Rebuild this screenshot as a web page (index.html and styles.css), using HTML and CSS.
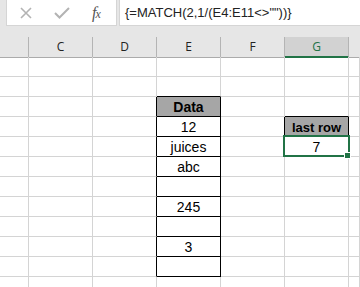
FILE: index.html
```html
<!DOCTYPE html>
<html>
<head>
    <title>MATCH last row</title>
    <link rel="stylesheet" href="styles.css">
</head>
<body>
    <div class="formula-bar">
        <div class="bar-buttons">
            <svg class="btn-icon" width="14" height="12" viewBox="0 0 14 12" fill="none" stroke="currentColor" stroke-width="1.6">
                <path d="M2 1l10 10M12 1L2 11"></path>
            </svg>
            <svg class="btn-icon" width="16" height="12" viewBox="0 0 16 12" fill="none" stroke="currentColor" stroke-width="2">
                <path d="M1 6l4.5 4.5L15 1"></path>
            </svg>
            <span class="fx">f<span class="fx-x">x</span></span>
        </div>
        <div class="formula">{=MATCH(2,1/(E4:E11&lt;&gt;""))}</div>
    </div>

    <div class="col-heads">
        <div class="head"></div>
        <div class="head">C</div>
        <div class="head">D</div>
        <div class="head">E</div>
        <div class="head">F</div>
        <div class="head active">G</div>
        <div class="head last"></div>
    </div>

    <div class="sheet">
        <!-- row 1 -->
        <div class="c"></div><div class="c"></div><div class="c"></div><div class="c"></div><div class="c"></div><div class="c"></div><div class="c"></div>
        <!-- row 2 -->
        <div class="c"></div><div class="c"></div><div class="c"></div><div class="c bb"></div><div class="c"></div><div class="c"></div><div class="c"></div>
        <!-- row 3 -->
        <div class="c"></div><div class="c"></div><div class="c br"></div><div class="c box th">Data</div><div class="c"></div><div class="c bb"></div><div class="c"></div>
        <!-- row 4 -->
        <div class="c"></div><div class="c"></div><div class="c br"></div><div class="c box">12</div><div class="c br"></div><div class="c box th narrow">last row</div><div class="c"></div>
        <!-- row 5 -->
        <div class="c"></div><div class="c"></div><div class="c br"></div><div class="c box">juices</div><div class="c"></div><div class="c sel">7</div><div class="c"></div>
        <!-- row 6 -->
        <div class="c"></div><div class="c"></div><div class="c br"></div><div class="c box">abc</div><div class="c"></div><div class="c"></div><div class="c"></div>
        <!-- row 7 -->
        <div class="c"></div><div class="c"></div><div class="c br"></div><div class="c box"></div><div class="c"></div><div class="c"></div><div class="c"></div>
        <!-- row 8 -->
        <div class="c"></div><div class="c"></div><div class="c br"></div><div class="c box">245</div><div class="c"></div><div class="c"></div><div class="c"></div>
        <!-- row 9 -->
        <div class="c"></div><div class="c"></div><div class="c br"></div><div class="c box"></div><div class="c"></div><div class="c"></div><div class="c"></div>
        <!-- row 10 -->
        <div class="c"></div><div class="c"></div><div class="c br"></div><div class="c box">3</div><div class="c"></div><div class="c"></div><div class="c"></div>
        <!-- row 11 -->
        <div class="c"></div><div class="c"></div><div class="c br"></div><div class="c box"></div><div class="c"></div><div class="c"></div><div class="c"></div>
        <!-- row 12 -->
        <div class="c"></div><div class="c"></div><div class="c"></div><div class="c"></div><div class="c"></div><div class="c"></div><div class="c"></div>
    </div>
</body>
</html>
```

FILE: styles.css
```css
body {
    margin: 0;
    padding: 0;
    width: 360px;
    height: 287px;
    overflow: hidden;
    background-color: #e6e6e6;
    font-family: 'Liberation Sans', Arial, sans-serif;
    color: #000;
}

/* formula bar */
.formula-bar {
    display: flex;
    gap: 2px;
    height: 37px;
    padding-left: 6px;
    box-sizing: border-box;
}
.bar-buttons {
    width: 111px;
    height: 26px;
    background-color: #fff;
    border: 1px solid #d5d5d5;
    border-top: none;
    box-sizing: border-box;
    display: flex;
    align-items: center;
    padding-left: 12px;
    gap: 21px;
    color: #b3b3b3;
}
.btn-icon {
    flex-shrink: 0;
}
.fx {
    font-family: 'Liberation Serif', 'Times New Roman', serif;
    font-style: italic;
    font-size: 16px;
    color: #555;
    margin-left: 1px;
    letter-spacing: -1px;
}
.fx-x {
    font-size: 12px;
}
.formula {
    flex: 1;
    height: 26px;
    background-color: #fff;
    border: 1px solid #d5d5d5;
    border-top: none;
    border-right: none;
    box-sizing: border-box;
    padding-left: 5px;
    font-size: 13px;
    line-height: 25px;
    color: #222;
    white-space: nowrap;
}

/* column headers */
.col-heads {
    display: grid;
    grid-template-columns: 29px repeat(5, 64px) 1fr;
    height: 20px;
}
.head {
    border-right: 1px solid #b4b4b4;
    border-bottom: 1px solid #ababab;
    box-sizing: border-box;
    text-align: center;
    font-family: 'Open Sans', sans-serif;
    font-size: 12px;
    line-height: 19px;
    color: #222;
}
.head.active {
    background-color: #d2d2d2;
    color: #217346;
    border-bottom: 2px solid #217346;
}
.head.last {
    border-right: none;
}

/* cells */
.sheet {
    display: grid;
    grid-template-columns: 29px repeat(5, 64px) 1fr;
    grid-auto-rows: 20px;
    background-color: #fff;
}
.c {
    border-right: 1px solid #d4d4d4;
    border-bottom: 1px solid #d4d4d4;
    box-sizing: border-box;
    display: flex;
    align-items: flex-end;
    justify-content: center;
    font-size: 14px;
    line-height: 17px;
    white-space: nowrap;
}
.c.bb {
    border-bottom-color: #000;
}
.c.br {
    border-right-color: #000;
}
.c.box {
    border-right-color: #000;
    border-bottom-color: #000;
}
.c.th {
    background-color: #a6a6a6;
    font-weight: bold;
}
.c.narrow {
    font-size: 13px;
}
.c.sel {
    position: relative;
}
.c.sel::after {
    content: '';
    position: absolute;
    left: -2px;
    top: -2px;
    right: -2px;
    bottom: -1px;
    border: 2px solid #217346;
}
.c.sel::before {
    content: '';
    position: absolute;
    right: -3px;
    bottom: -3px;
    width: 5px;
    height: 5px;
    background-color: #217346;
    border: 1px solid #fff;
    z-index: 1;
}
```
